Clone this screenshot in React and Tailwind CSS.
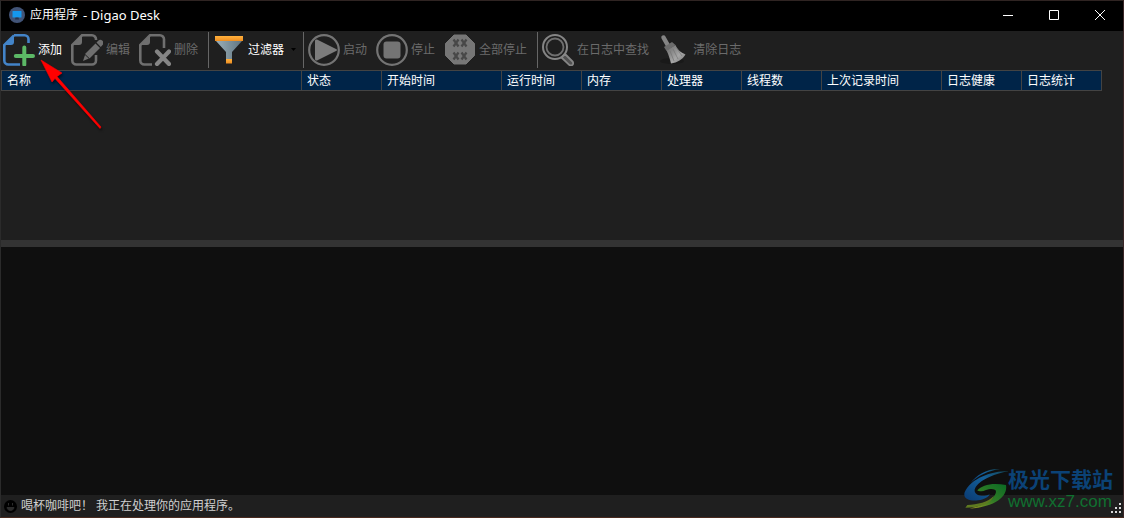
import React from 'react';

const columns = [
  { label: '名称', width: 'w-[301px]' },
  { label: '状态', width: 'w-20' },
  { label: '开始时间', width: 'w-[120px]' },
  { label: '运行时间', width: 'w-20' },
  { label: '内存', width: 'w-20' },
  { label: '处理器', width: 'w-20' },
  { label: '线程数', width: 'w-20' },
  { label: '上次记录时间', width: 'w-[120px]' },
  { label: '日志健康', width: 'w-20' },
  { label: '日志统计', width: 'w-20' },
];

const Icon = ({ children }) => (
  <svg viewBox="0 0 32 32" className="w-8 h-8 shrink-0" fill="none" aria-hidden="true">
    {children}
  </svg>
);

const AddIcon = () => (
  <Icon>
    <path d="M11 1.3h10.500a4 4 0 0 1 4 4V9M11 1.300 1.300 11v15.500a4 4 0 0 0 4 4h11.700" stroke="#4384c8" strokeWidth="2.600" />
    <path d="M1 11 11 1v7a3 3 0 0 1-3 3Z" fill="#4384c8" />
    <path d="M21.300 13.500v17M12.800 22h17.200" stroke="#5cb866" strokeWidth="4" strokeLinecap="round" />
  </Icon>
);

const EditIcon = () => (
  <Icon>
    <path d="M25 6V5.300a4 4 0 0 0-4-4H11L1.300 11v15.500a4 4 0 0 0 4 4H21a4 4 0 0 0 4-4V21" stroke="#6f6f6f" strokeWidth="2.600" />
    <path d="M1 11 11 1v7a3 3 0 0 1-3 3Z" fill="#6f6f6f" />
    <path d="m12 27 2.500-7.500L24.500 9.500l4.500 4.500L19 24Z" fill="#6f6f6f" />
    <path d="m25.500 8.500 1.700-1.700a3 3 0 0 1 4.300 4.300L29.800 13Z" fill="#6f6f6f" />
    <path d="m14 20.500 4 3.800" stroke="#1f1f1f" />
  </Icon>
);

const DeleteIcon = () => (
  <Icon>
    <path d="M25 14V5.300a4 4 0 0 0-4-4H11L1.300 11v15.500a4 4 0 0 0 4 4H13" stroke="#6f6f6f" strokeWidth="2.600" />
    <path d="M1 11 11 1v7a3 3 0 0 1-3 3Z" fill="#6f6f6f" />
    <path d="m18 17.500 12 12.500M30 17.500 18 30" stroke="#858585" strokeWidth="4.200" strokeLinecap="round" />
  </Icon>
);

const FilterIcon = () => (
  <Icon>
    <defs>
      <linearGradient id="funnel" x2="1">
        <stop stopColor="#9aafb8" />
        <stop offset="1" stopColor="#607480" />
      </linearGradient>
      <linearGradient id="rim" x2="0" y2="1">
        <stop stopColor="#ffb13d" />
        <stop offset="1" stopColor="#ee8d20" />
      </linearGradient>
    </defs>
    <path d="M3 7h26L19 18v9h-6v-9Z" fill="url(#funnel)" />
    <rect x="2" y="2" width="28" height="5" fill="url(#rim)" />
    <rect x="13" y="25" width="6" height="4.500" fill="url(#rim)" />
  </Icon>
);

const StartIcon = () => (
  <Icon>
    <circle cx="16" cy="16" r="14.800" stroke="#747474" strokeWidth="2.200" />
    <path d="M9 5.500 28.500 15.200a.9.9 0 0 1 0 1.600L9 26.500A1.500 1.500 0 0 1 7 25V7a1.500 1.500 0 0 1 2-1.500Z" fill="#7c7c7c" />
  </Icon>
);

const StopIcon = () => (
  <Icon>
    <circle cx="16" cy="16" r="14.800" stroke="#747474" strokeWidth="2.200" />
    <rect x="7.500" y="7.500" width="17" height="17" rx="3" fill="#747474" />
  </Icon>
);

const StopAllIcon = () => (
  <Icon>
    <path d="M10 1h12l8.500 8.500v12L22 30H10l-8.500-8.500v-12Z" fill="#767676" stroke="#767676" strokeLinejoin="round" />
    <path
      d="m9.500 5.500 5 7m0-7-5 7m8-7 5 7m0-7-5 7m-8 6 5 7m0-7-5 7m8-7 5 7m0-7-5 7"
      stroke="#484848"
      strokeWidth="2.200"
    />
  </Icon>
);

const SearchIcon = () => (
  <Icon>
    <circle cx="13" cy="13" r="12" stroke="#858585" strokeWidth="2" />
    <circle cx="13" cy="13" r="8.500" stroke="#707070" strokeWidth="1.800" />
    <path d="m19.500 23.500 3.500-3.500 7.500 7.500a2.300 2.300 0 0 1-3.300 3.300Z" fill="#505050" stroke="#858585" strokeWidth="1.800" strokeLinejoin="round" />
  </Icon>
);

const ClearIcon = () => (
  <Icon>
    <defs>
      <linearGradient id="bristles" x2="1" y2="1">
        <stop stopColor="#686868" />
        <stop offset=".6" stopColor="#a6a6a6" />
        <stop offset="1" stopColor="#777" />
      </linearGradient>
    </defs>
    <ellipse cx="14" cy="27" rx="12" ry="3" fill="#191919" />
    <path d="m5.500 3.500 4.500 8" stroke="#848484" strokeWidth="4.500" strokeLinecap="round" />
    <path d="m6 13 8-5 3.500 3L8.500 17Z" fill="#6c6c6c" />
    <path d="m8.500 16.500 9-5.500c2 5 5 7 10 9.500-3 5-8 8-14.500 9-1-4-2-8-4.500-13Z" fill="url(#bristles)" />
    <path d="m12 17 4 10m-1-12 5 10m-2-12 6 9" stroke="#747474" strokeWidth=".7" />
  </Icon>
);

const ToolButton = ({ icon, label, disabled }) => (
  <button
    disabled={disabled}
    className="flex items-center gap-[3px] pl-0.5 pr-[7px] h-9 text-white disabled:text-[#6b6b6b] whitespace-nowrap"
  >
    {icon}
    {label}
  </button>
);

const Separator = () => <div className="w-px h-9 ml-[3px] mr-0.5 bg-[#666]" />;

const Watermark = () => (
  <div className="absolute right-2.5 bottom-1.5 flex items-start pointer-events-none">
    <svg viewBox="12 12 132 129" className="w-11 h-[43px]" aria-hidden="true">
      <defs>
        <linearGradient id="wave" x1="0" x2="1" y1="1" y2="0">
          <stop stopColor="#0a3a72" />
          <stop offset=".6" stopColor="#14609a" />
          <stop offset="1" stopColor="#154654" />
        </linearGradient>
        <linearGradient id="leaf" x1="0" x2="1" y1="1" y2="0">
          <stop stopColor="#9a9420" />
          <stop offset=".5" stopColor="#2f7b26" />
          <stop offset="1" stopColor="#0a6a24" />
        </linearGradient>
      </defs>
      <path d="M120 18C82 16 48 36 32 60 54 38 84 24 120 18Z" fill="url(#wave)" />
      <path d="M148 24C96 24 34 44 14 88c-6 18 14 27 40 24 18-2 32-10 35-18-16 8-42 6-45-9C42 64 82 36 148 24Z" fill="url(#wave)" />
      <path d="M52 82C66 66 96 58 138 66c6 34-32 66-110 71 32-8 74-22 80-50 1-8-10-10-22-8-8 1-12 6-22 6-6 0-10-1-12-3Z" fill="url(#leaf)" />
      <path d="M102 98C84 118 52 124 22 126l-6 8c42 0 78-12 86-36Z" fill="#5f7a20" />
    </svg>
    <div>
      <div className="mb-0.5 text-[21px] leading-6 font-bold text-[#0b4276]">极光下载站</div>
      <div className="font-['Liberation_Sans',sans-serif] text-[17px] leading-[18px] text-[#107030]">www.xz7.com</div>
    </div>
  </div>
);

const WindowButton = ({ label, d }) => (
  <button aria-label={label} className="w-[46px] h-full flex items-center justify-center">
    <svg viewBox="0 0 10 10" className="w-2.5 h-2.5" fill="none" stroke="currentColor" aria-hidden="true">
      <path d={d} />
    </svg>
  </button>
);

const TitleBar = () => (
  <header className="flex items-center h-[30px] bg-black text-white pl-2 pb-0.5">
    <svg viewBox="0 0 16 16" className="w-4 h-4 mr-[5px]" aria-hidden="true">
      <circle cx="8" cy="8" r="8" fill="#425477" />
      <rect x="3.500" y="4" width="9" height="6.500" rx=".5" fill="#1598ee" />
      <path d="M6.500 10.500h3l.5 2H6Z" fill="#27364f" />
    </svg>
    <h1 className="flex-1 flex gap-[5px] text-[12px]">
      应用程序
      <span className="font-['Noto_Sans',sans-serif] text-[13px]">- Digao Desk</span>
    </h1>
    <WindowButton label="最小化" d="M0 5.500h10" />
    <WindowButton label="最大化" d="M.5.5h9v9h-9Z" />
    <WindowButton label="关闭" d="m0 0 10 10M10 0 0 10" />
  </header>
);

const App = () => {
  return (
    <div className="relative min-h-screen flex flex-col bg-[#1f1f1f] border border-t-[#2f2422] border-l-[#2b2b2b] border-r-[#3a2526] border-b-[#4a2a1e] font-['Open_Sans','Noto_Sans_CJK_SC',sans-serif] text-[12px] leading-4">
      <TitleBar />

      <nav className="flex items-center h-[39px] pb-0.5">
        <ToolButton icon={<AddIcon />} label="添加" />
        <ToolButton icon={<EditIcon />} label="编辑" disabled />
        <ToolButton icon={<DeleteIcon />} label="删除" disabled />
        <Separator />
        <button className="flex items-center gap-[3px] pl-0.5 pr-1 h-9 text-white whitespace-nowrap">
          <FilterIcon />
          过滤器
          <svg viewBox="0 0 5 3" className="w-[5px] h-[3px] ml-1" aria-hidden="true">
            <path d="M0 0h5L2.500 3Z" fill="#000" />
          </svg>
        </button>
        <Separator />
        <ToolButton icon={<StartIcon />} label="启动" disabled />
        <ToolButton icon={<StopIcon />} label="停止" disabled />
        <ToolButton icon={<StopAllIcon />} label="全部停止" disabled />
        <Separator />
        <ToolButton icon={<SearchIcon />} label="在日志中查找" disabled />
        <ToolButton icon={<ClearIcon />} label="清除日志" disabled />
      </nav>

      {/* Application list */}
      <main className="h-[170px] overflow-hidden">
        <table className="table-fixed w-[1101px] border-separate border-spacing-0">
          <thead>
            <tr>
              {columns.map((col) => (
                <th
                  key={col.label}
                  className={`${col.width} h-[21px] p-0 pl-[5px] first:border-l border-r border-y border-[#434343] bg-[#002448] text-left font-normal text-white`}
                >
                  {col.label}
                </th>
              ))}
            </tr>
          </thead>
        </table>
      </main>

      <div className="h-[7px] bg-[#333]" />

      {/* Log output */}
      <section className="flex-1 bg-[#0f0f0f]" />

      <footer className="flex items-center h-[22px] pl-[3px] gap-1 text-[#d0d0d0]">
        <svg viewBox="0 0 13 13" className="w-[13px] h-[13px]" aria-hidden="true">
          <circle cx="6.500" cy="6.500" r="6.500" fill="#000" />
          <path d="M4.500 3v2.500M8.500 3v2.500M3 7.500h7c-.5 4-6.500 4-7 0Z" fill="#2c2c2c" stroke="#2c2c2c" />
        </svg>
        <span>喝杯咖啡吧！ 我正在处理你的应用程序。</span>
      </footer>

      <Watermark />

      {/* Resize grip */}
      <svg viewBox="0 0 12 12" className="absolute right-0 bottom-0.5 w-3 h-3" aria-hidden="true">
        <path d="M8 0h2v2H8zM4 4h2v2H4zM8 4h2v2H8zM0 8h2v2H0zM4 8h2v2H4zM8 8h2v2H8z" fill="#d8d8d8" />
      </svg>

      {/* Pointer to the add button */}
      <svg
        viewBox="0 0 64 72"
        className="absolute left-[39px] top-[58px] w-16 h-[72px] pointer-events-none drop-shadow-[1px_2px_1px_#0008]"
        aria-hidden="true"
      >
        <path d="M1 1 22 14 17 17.500 61 68 60 69.500 15 19.500 12 23Z" fill="#f00" stroke="#f00" strokeWidth=".6" />
      </svg>
    </div>
  );
};

export default App;
